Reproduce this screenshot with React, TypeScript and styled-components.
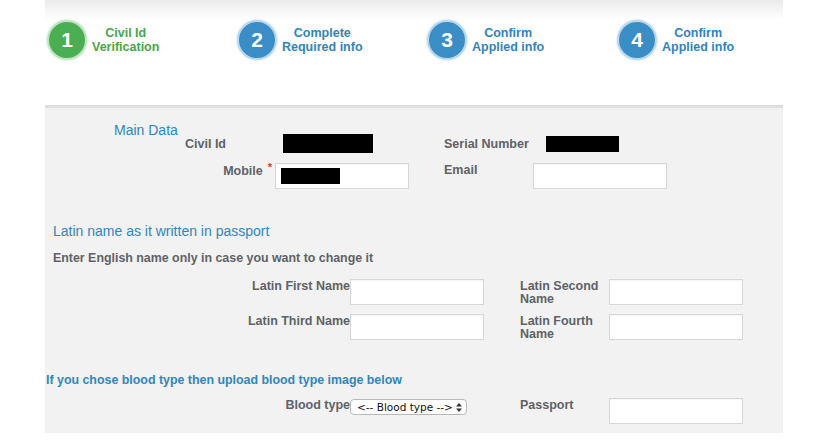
import React from "react";
import styled, { createGlobalStyle } from "styled-components";

const GlobalStyle = createGlobalStyle`
  body {
    margin: 0;
    background: #fff;
    font-family: "Liberation Sans", Arial, sans-serif;
  }
`;

const Page = styled.div`
  width: 738px;
  margin-left: 45px;
`;

const Header = styled.div`
  height: 105px;
  background: linear-gradient(#ebebeb 0, #fff 20px);
  box-sizing: border-box;
  padding: 21px 0 0 3px;
  display: flex;
  align-items: flex-start;
`;

const Step = styled.div`
  flex: 0 0 190px;
  display: flex;
  align-items: center;
  gap: 6px;
`;

const Circle = styled.div<{ $color: string }>`
  width: 36px;
  height: 36px;
  border-radius: 50%;
  background: ${({ $color }) => $color};
  border: 1px solid rgba(255, 255, 255, 0.7);
  box-shadow: 0 0 3px ${({ $color }) => $color};
  color: #fff;
  font-size: 21px;
  font-weight: 700;
  display: flex;
  align-items: center;
  justify-content: center;
`;

const StepText = styled.div<{ $color: string }>`
  color: ${({ $color }) => $color};
  font-size: 12.5px;
  font-weight: 700;
  line-height: 14px;
  text-align: center;
`;

const Panel = styled.div`
  background: #f2f2f2;
  border-top: 3px solid #dedede;
  padding-bottom: 9px;
`;

const SectionTitle = styled.div<{ $indent: number }>`
  color: #2f86c0;
  font-size: 14px;
  line-height: 16px;
  margin-left: ${({ $indent }) => $indent}px;
`;

const NoteTitle = styled.div`
  color: #2f86c0;
  font-size: 12.4px;
  font-weight: 700;
  line-height: 14px;
  margin-top: 32px;
  padding-left: 1px;
`;

const Instruction = styled.div`
  color: #5f6268;
  font-size: 12.4px;
  font-weight: 700;
  line-height: 14px;
  margin: 12px 0 0 8px;
`;

const Row = styled.div<{ $cols: string; $top: number; $align?: string }>`
  display: grid;
  grid-template-columns: ${({ $cols }) => $cols};
  align-items: ${({ $align }) => $align || "start"};
  margin-top: ${({ $top }) => $top}px;
`;

const Label = styled.div<{ $right?: boolean; $pad?: number }>`
  color: #5f6268;
  font-size: 12.5px;
  font-weight: 700;
  line-height: 13px;
  padding-top: ${({ $pad }) => $pad ?? 1}px;
  text-align: ${({ $right }) => ($right ? "right" : "left")};
`;

const Required = styled.span`
  color: #e0322c;
  font-size: 11px;
  vertical-align: top;
  margin: 0 3px 0 5px;
  position: relative;
  top: -4px;
`;

const Input = styled.div`
  height: 26px;
  box-sizing: border-box;
  background: #fff;
  border: 1px solid #d7d7d7;
  box-shadow: inset 0 1px 1px rgba(0, 0, 0, 0.04);
  padding: 4px 5px;
`;

const Redacted = styled.div<{ $w: number; $h: number }>`
  width: ${({ $w }) => $w}px;
  height: ${({ $h }) => $h}px;
  background: #000;
`;

const Select = styled.div`
  height: 16px;
  margin-top: 1px;
  box-sizing: border-box;
  background: #fff;
  border: 1px solid #b9b9b9;
  border-radius: 4px;
  display: flex;
  align-items: center;
  justify-content: space-between;
  padding: 0 4px 0 6px;
  font-family: "DejaVu Sans", sans-serif;
  font-size: 10.5px;
  color: #111;
`;

const steps = [
  { n: 1, a: "Civil Id", b: "Verification", color: "#4aae52", text: "#46a84b" },
  { n: 2, a: "Complete", b: "Required info", color: "#3a8ec5", text: "#2f84bf" },
  { n: 3, a: "Confirm", b: "Applied info", color: "#3a8ec5", text: "#2f84bf" },
  { n: 4, a: "Confirm", b: "Applied info", color: "#3a8ec5", text: "#2f84bf" },
];

const latinCols = "305px 134px 36px 89px 134px";

export default function App() {
  return (
    <>
      <GlobalStyle />
      <Page>
        <Header>
          {steps.map((s) => (
            <Step key={s.n}>
              <Circle $color={s.color}>{s.n}</Circle>
              <StepText $color={s.text}>
                {s.a}
                <br />
                {s.b}
              </StepText>
            </Step>
          ))}
        </Header>
        <Panel>
          <div style={{ height: 14 }} />
          <SectionTitle $indent={69}>Main Data</SectionTitle>
          <Row $cols="181px 57px 90px 71px 102px 73px" $top={-4} $align="center">
            <Label $right $pad={2}>Civil Id</Label>
            <span />
            <Redacted $w={90} $h={19} />
            <span />
            <Label $pad={2}>Serial Number</Label>
            <Redacted $w={73} $h={16} />
          </Row>
          <Row $cols="230px 134px 35px 89px 134px" $top={10}>
            <Label $right $pad={2}>
              Mobile<Required>*</Required>
            </Label>
            <Input>
              <Redacted $w={59} $h={16} />
            </Input>
            <span />
            <Label $pad={1}>Email</Label>
            <Input />
          </Row>
          <div style={{ height: 34 }} />
          <SectionTitle $indent={8}>Latin name as it written in passport</SectionTitle>
          <Instruction>Enter English name only in case you want to change it</Instruction>
          <Row $cols={latinCols} $top={14}>
            <Label $right>Latin First Name</Label>
            <Input />
            <span />
            <Label>
              Latin Second
              <br />
              Name
            </Label>
            <Input />
          </Row>
          <Row $cols={latinCols} $top={8}>
            <Label $right>Latin Third Name</Label>
            <Input />
            <span />
            <Label>
              Latin Fourth
              <br />
              Name
            </Label>
            <Input />
          </Row>
          <NoteTitle>If you chose blood type then upload blood type image below</NoteTitle>
          <Row $cols="305px 117px 53px 89px 134px" $top={11}>
            <Label $right $pad={1}>Blood type</Label>
            <Select>
              <span>&lt;-- Blood type --&gt;</span>
              <svg width="6" height="9" viewBox="0 0 6 9">
                <path d="M3 0 L6 3.5 H0 Z M3 9 L6 5.5 H0 Z" fill="#333" />
              </svg>
            </Select>
            <span />
            <Label $pad={1}>Passport</Label>
            <Input />
          </Row>
        </Panel>
      </Page>
    </>
  );
}
